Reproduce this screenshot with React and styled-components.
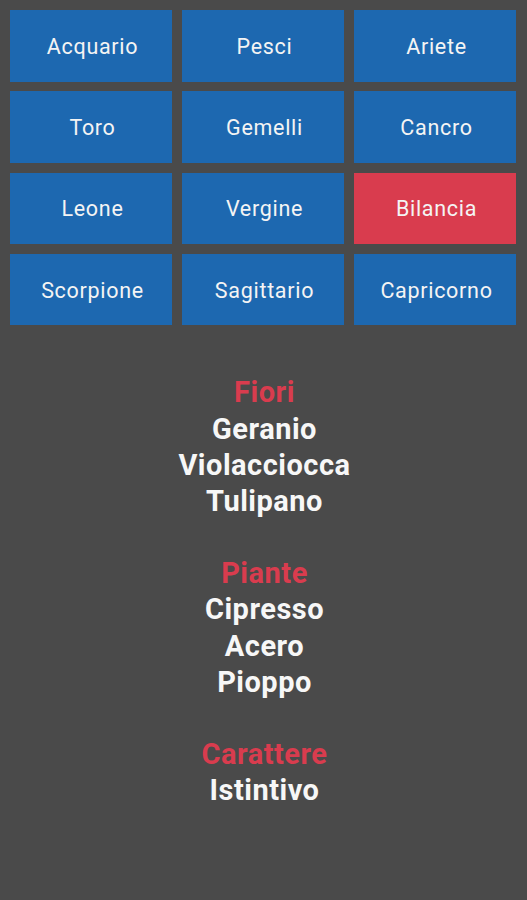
import React from "react";
import styled, { createGlobalStyle } from "styled-components";

const Global = createGlobalStyle`
  html, body { margin: 0; padding: 0; background: #4a4a4a; }
  body { font-family: Roboto, "Liberation Sans", sans-serif; }
`;

const Page = styled.div`
  min-height: 900px;
  background: #4a4a4a;
  padding: 10px 11px 0 10px;
  box-sizing: border-box;
`;

const Grid = styled.div`
  display: grid;
  grid-template-columns: repeat(3, 162px);
  grid-auto-rows: 71.5px;
  column-gap: 10px;
  row-gap: 9.8px;
`;

const SignButton = styled.button`
  border: none;
  margin: 0;
  padding: 1px 0 0 3px;
  background: ${(p) => (p.$active ? "#d93c4e" : "#1d68b0")};
  color: #f4f4f4;
  font-family: Roboto, "Liberation Sans", sans-serif;
  font-size: 21.5px;
  letter-spacing: 0.7px;
  font-weight: 400;
  cursor: pointer;
`;

const Info = styled.div`
  margin-top: 49px;
  padding-left: 3px;
  display: flex;
  flex-direction: column;
  align-items: center;
  text-align: center;
`;

const Section = styled.div`
  display: flex;
  flex-direction: column;
  align-items: center;
  margin-bottom: 36px;
`;

const Line = styled.div`
  font-size: 29px;
  font-weight: 700;
  letter-spacing: 0.5px;
  line-height: 36.2px;
  color: ${(p) => (p.$title ? "#d93c4e" : "#f7f7f7")};
`;

const signs = [
  "Acquario", "Pesci", "Ariete",
  "Toro", "Gemelli", "Cancro",
  "Leone", "Vergine", "Bilancia",
  "Scorpione", "Sagittario", "Capricorno",
];

const sections = [
  { title: "Fiori", items: ["Geranio", "Violacciocca", "Tulipano"] },
  { title: "Piante", items: ["Cipresso", "Acero", "Pioppo"] },
  { title: "Carattere", items: ["Istintivo"] },
];

export default function App() {
  return (
    <Page>
      <Global />
      <Grid>
        {signs.map((s) => (
          <SignButton key={s} $active={s === "Bilancia"}>{s}</SignButton>
        ))}
      </Grid>
      <Info>
        {sections.map((sec) => (
          <Section key={sec.title}>
            <Line $title>{sec.title}</Line>
            {sec.items.map((i) => (
              <Line key={i}>{i}</Line>
            ))}
          </Section>
        ))}
      </Info>
    </Page>
  );
}
